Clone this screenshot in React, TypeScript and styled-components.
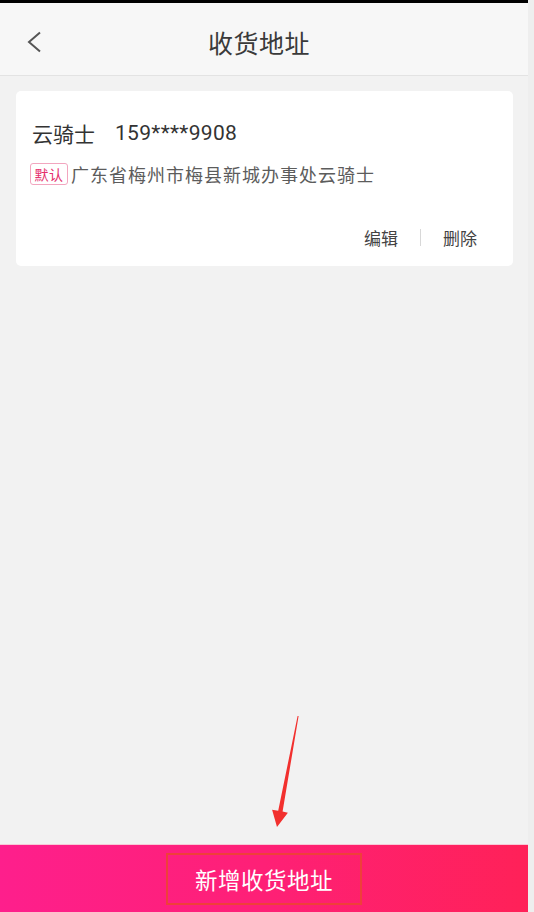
import React from "react";
import styled, { createGlobalStyle } from "styled-components";

const GlobalStyle = createGlobalStyle`
  html, body {
    margin: 0;
    padding: 0;
    background: #eeeeee;
  }
  body {
    font-family: "Roboto", "Noto Sans CJK SC", sans-serif;
    -webkit-font-smoothing: antialiased;
  }
  * {
    box-sizing: border-box;
  }
`;

export default function App() {
  return (
    <>
      <GlobalStyle />
      <Page>
        <StatusBar />
        <Header>
          <BackButton aria-label="返回">
            <svg width="18" height="22" viewBox="0 0 18 22">
              <path
                d="M15 1.5 L4 11 L15 20.5"
                fill="none"
                stroke="#555"
                strokeWidth="2"
                strokeLinejoin="miter"
              />
            </svg>
          </BackButton>
          <Title>收货地址</Title>
          <Spacer />
        </Header>

        <Main>
          <AddressCard>
            <NameRow>
              <span>云骑士</span>
              <Phone>159****9908</Phone>
            </NameRow>
            <AddressRow>
              <DefaultTag>默认</DefaultTag>
              <AddressText>广东省梅州市梅县新城办事处云骑士</AddressText>
            </AddressRow>
            <Actions>
              <ActionLink>编辑</ActionLink>
              <Divider />
              <ActionLink>删除</ActionLink>
            </Actions>
          </AddressCard>

          <Pointer width="40" height="120" viewBox="0 0 40 120">
            <polygon
              points="34.6,5 18.6,100.6 23.9,101.8 13,116 8.1,98.8 14.2,99.8 33.6,5"
              fill="#f2302e"
            />
          </Pointer>
        </Main>

        <AddButton>
          <AddLabel>新增收货地址</AddLabel>
        </AddButton>
      </Page>
    </>
  );
}

const Page = styled.div`
  position: relative;
  width: 528px;
  min-height: 100vh;
  display: flex;
  flex-direction: column;
  background: #f2f2f2;
`;

const StatusBar = styled.div`
  height: 3px;
  background: #000;
`;

const Header = styled.header`
  height: 73px;
  padding-top: 6px;
  display: grid;
  grid-template-columns: 60px 1fr 60px;
  align-items: center;
  background: #f7f7f7;
  border-bottom: 1px solid #e3e3e3;
`;

const BackButton = styled.button`
  display: flex;
  align-items: center;
  justify-content: flex-start;
  padding: 0 0 0 25px;
  height: 40px;
  border: none;
  background: transparent;
`;

const Title = styled.h1`
  margin: 0;
  padding-right: 10px;
  text-align: center;
  font-size: 25px;
  font-weight: 400;
  color: #3a3a3a;
  letter-spacing: 0.5px;
`;

const Spacer = styled.div``;

const Main = styled.main`
  position: relative;
  flex: 1;
  padding: 15px 15px 0 16px;
`;

const AddressCard = styled.section`
  height: 175px;
  padding: 21px 36px 0 16px;
  display: flex;
  flex-direction: column;
  background: #fff;
  border-radius: 5px;
`;

const NameRow = styled.div`
  display: flex;
  gap: 20px;
  height: 42px;
  align-items: center;
  font-size: 21px;
  color: #333;
`;

const Phone = styled.span`
  font-size: 21px;
  letter-spacing: 0.3px;
`;

const AddressRow = styled.div`
  margin-top: 7px;
  display: flex;
  align-items: center;
  gap: 3px;
  margin-left: -2px;
`;

const DefaultTag = styled.span`
  display: inline-flex;
  align-items: center;
  justify-content: center;
  width: 38px;
  height: 22px;
  font-size: 14px;
  color: #e5306c;
  border: 1px solid #f2a6bf;
  border-radius: 3px;
  letter-spacing: 0.5px;
`;

const AddressText = styled.span`
  font-size: 18px;
  letter-spacing: 1px;
  color: #5c5c5c;
`;

const Actions = styled.div`
  margin-top: 38px;
  display: flex;
  justify-content: flex-end;
  align-items: center;
  gap: 22px;
`;

const ActionLink = styled.span`
  font-size: 17px;
  color: #444;
  cursor: pointer;
`;

const Divider = styled.span`
  width: 1px;
  height: 17px;
  background: #d8d8d8;
`;

const Pointer = styled.svg`
  position: absolute;
  left: 264px;
  top: 635px;
`;

const AddButton = styled.button`
  height: 68px;
  width: 100%;
  display: flex;
  align-items: center;
  justify-content: center;
  border: none;
  border-top: 1px solid #f8c8d6;
  background: linear-gradient(90deg, #fe1f8c 0%, #fe2076 50%, #ff2158 100%);
  font-family: inherit;
  cursor: pointer;
`;

const AddLabel = styled.span`
  width: 196px;
  height: 52px;
  display: flex;
  align-items: center;
  justify-content: center;
  border: 2px solid #ef3f3a;
  font-size: 22.5px;
  color: #fff;
  letter-spacing: 0.5px;
`;
